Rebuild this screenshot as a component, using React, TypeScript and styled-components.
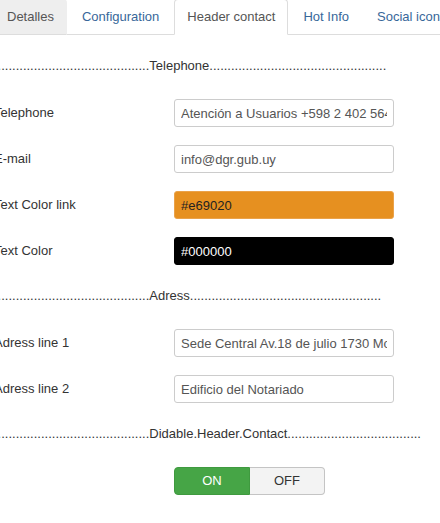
import React from "react";
import styled, { createGlobalStyle } from "styled-components";

const GlobalStyle = createGlobalStyle`
  html, body {
    margin: 0;
    padding: 0;
    background: #fff;
    overflow: hidden;
  }
  body {
    font-family: "Liberation Sans", Arial, sans-serif;
    font-size: 13px;
    line-height: 18px;
    color: #333;
  }
`;

const Page = styled.div`
  margin: -1px 0 0 -6px;
  width: 470px;
`;

const TabList = styled.div`
  display: flex;
  flex-wrap: nowrap;
  white-space: nowrap;
  border-bottom: 1px solid #ddd;
  margin: 0 0 18px;
`;

type TabKind = "hover" | "link" | "active";

const Tab = styled.div<{ $kind: TabKind }>`
  padding: 8px 12px;
  line-height: 18px;
  margin-right: 2px;
  margin-bottom: -1px;
  border: 1px solid transparent;
  border-radius: 4px 4px 0 0;
  color: ${(p) => (p.$kind === "link" ? "#38679a" : "#555")};
  background: ${(p) =>
    p.$kind === "hover" ? "#eee" : p.$kind === "active" ? "#fff" : "transparent"};
  border-color: ${(p) =>
    p.$kind === "hover"
      ? "#eee #eee #ddd"
      : p.$kind === "active"
      ? "#ddd #ddd transparent"
      : "transparent"};
`;

const Form = styled.div`
  display: flex;
  flex-direction: column;
`;

const Spacer = styled.div`
  box-sizing: border-box;
  height: 28px;
  padding-top: 4px;
  margin-bottom: 18px;
  white-space: nowrap;
  color: #333;
`;

const Row = styled.div`
  display: flex;
  align-items: center;
  height: 28px;
  margin-bottom: 18px;
`;

const Label = styled.div`
  width: 180px;
  flex: none;
  color: #333;
  white-space: nowrap;
`;

const TextInput = styled.input<{ $bg?: string; $fg?: string; $border?: string }>`
  box-sizing: border-box;
  width: 220px;
  height: 28px;
  padding: 4px 6px;
  margin: 0;
  font-family: "Liberation Sans", Arial, sans-serif;
  font-size: 13px;
  line-height: 18px;
  color: ${(p) => p.$fg ?? "#555"};
  background: ${(p) => p.$bg ?? "#fff"};
  border: 1px solid ${(p) => p.$border ?? "#ccc"};
  border-radius: 3px;
  outline: none;
`;

const Toggle = styled.div`
  display: flex;
  height: 28px;
`;

const ToggleButton = styled.div<{ $on?: boolean }>`
  box-sizing: border-box;
  width: ${(p) => (p.$on ? "76px" : "75px")};
  height: 28px;
  display: flex;
  align-items: center;
  justify-content: center;
  font-size: 13px;
  color: ${(p) => (p.$on ? "#fff" : "#333")};
  background: ${(p) => (p.$on ? "#46a546" : "#f3f3f3")};
  border: 1px solid ${(p) => (p.$on ? "#3f9a3f" : "#c4c4c4")};
  border-radius: ${(p) => (p.$on ? "4px 0 0 4px" : "0 4px 4px 0")};
  ${(p) => (p.$on ? "" : "border-left: none;")}
`;

const dots = (n: number) => ".".repeat(n);

const fields: { label: string; value: string; bg?: string; fg?: string; border?: string }[] = [
  { label: "Telephone", value: "Atención a Usuarios +598 2 402 5646" },
  { label: "E-mail", value: "info@dgr.gub.uy" },
  { label: "Text Color link", value: "#e69020", bg: "#e69020", fg: "#222", border: "#eaa24a" },
  { label: "Text Color", value: "#000000", bg: "#000", fg: "#fff", border: "#000" },
];

const address = [
  { label: "Adress line 1", value: "Sede Central Av.18 de julio 1730 Montevideo" },
  { label: "Adress line 2", value: "Edificio del Notariado" },
];

export default function App() {
  return (
    <>
      <GlobalStyle />
      <Page>
        <TabList>
          <Tab $kind="hover">Detalles</Tab>
          <Tab $kind="link">Configuration</Tab>
          <Tab $kind="active">Header contact</Tab>
          <Tab $kind="link">Hot Info</Tab>
          <Tab $kind="link">Social icons</Tab>
        </TabList>
        <Form>
          <Spacer>{dots(43) + "Telephone" + dots(49)}</Spacer>
          {fields.map((f) => (
            <Row key={f.label}>
              <Label>{f.label}</Label>
              <TextInput
                type="text"
                defaultValue={f.value}
                readOnly
                $bg={f.bg}
                $fg={f.fg}
                $border={f.border}
              />
            </Row>
          ))}
          <Spacer>{dots(43) + "Adress" + dots(53)}</Spacer>
          {address.map((f) => (
            <Row key={f.label}>
              <Label>{f.label}</Label>
              <TextInput type="text" defaultValue={f.value} readOnly />
            </Row>
          ))}
          <Spacer>{dots(43) + "Didable.Header.Contact" + dots(37)}</Spacer>
          <Row>
            <Label />
            <Toggle>
              <ToggleButton $on>ON</ToggleButton>
              <ToggleButton>OFF</ToggleButton>
            </Toggle>
          </Row>
        </Form>
      </Page>
    </>
  );
}
